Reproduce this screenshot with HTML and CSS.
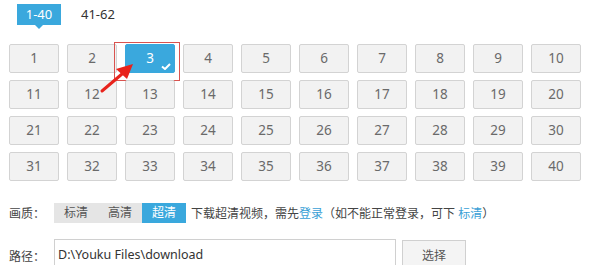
FILE: index.html
```html
<!DOCTYPE html>
<html lang="zh-CN">
<head>
    <meta charset="UTF-8">
    <title>选集下载</title>
    <link rel="stylesheet" href="styles.css">
</head>
<body>

<div class="tabs">
    <span class="tab active">1-40</span>
    <span class="tab">41-62</span>
</div>

<div class="episodes" id="episodes"></div>

<div class="row quality">
    <span class="label">画质：</span>
    <div class="seg">
        <span>标清</span>
        <span>高清</span>
        <span class="on">超清</span>
    </div>
    <span class="tip">下载超清视频，需先<a href="#">登录</a>（如不能正常登录，可下 <a href="#">标清</a>）</span>
</div>

<div class="row path">
    <span class="label">路径：</span>
    <input type="text" value="D:\Youku Files\download">
    <button>选择</button>
</div>

<svg class="arrow" width="599" height="265" viewBox="0 0 599 265">
    <line x1="102" y1="91" x2="122" y2="74" stroke="#e8231c" stroke-width="3" stroke-linecap="round"/>
    <polygon points="133,64 116,69 127,79" fill="#e8231c"/>
</svg>

<script>
    const list = document.getElementById('episodes');
    for (let i = 1; i <= 40; i++) {
        const b = document.createElement('span');
        b.className = 'ep';
        b.textContent = i;
        if (i === 3) {
            b.classList.add('picked');
            b.innerHTML = '3<svg class="check" width="10" height="7" viewBox="0 0 10 7"><path d="M1 3.5 L4 6 L9 1" stroke="#fff" stroke-width="2" fill="none"/></svg>';
        }
        list.appendChild(b);
    }
</script>

</body>
</html>
```

FILE: styles.css
```css
body {
    margin: 0;
    font-family: "Noto Sans", "Noto Sans CJK SC", sans-serif;
    font-size: 13px;
    color: #555;
    background: #fff;
    position: relative;
    width: 599px;
    height: 265px;
    overflow: hidden;
}
.tabs {
    display: flex;
    align-items: center;
    padding: 4px 0 0 17px;
    height: 21px;
}
.tab {
    line-height: 21px;
    color: #333;
    white-space: nowrap;
    position: relative;
}
.tab.active {
    background: #3aa8dd;
    color: #fff;
    width: 44px;
    text-align: center;
    margin-right: 20px;
}
.tab.active::after {
    content: "";
    position: absolute;
    left: 18px;
    bottom: -4px;
    border-left: 4px solid transparent;
    border-right: 4px solid transparent;
    border-top: 4px solid #3aa8dd;
}
.episodes {
    display: grid;
    grid-template-columns: repeat(10, 50px);
    column-gap: 8px;
    row-gap: 7px;
    padding: 19px 0 0 9px;
}
.ep {
    height: 27px;
    line-height: 27px;
    border: 1px solid #d3d3d3;
    border-radius: 2px;
    background: #f2f2f2;
    text-align: center;
    color: #6a6a6a;
    font-size: 13.5px;
    box-sizing: content-box;
    width: 48px;
    position: relative;
}
.ep.picked {
    background: #3aa8dd;
    border-color: #3aa8dd;
    color: #fff;
}
.ep.picked::after {
    content: "";
    position: absolute;
    left: -12px;
    right: -6px;
    top: -3px;
    bottom: -9px;
    border: 1px solid #d9534f;
}
.check {
    position: absolute;
    right: 3px;
    bottom: 2px;
}
.row {
    display: flex;
    align-items: center;
    padding-left: 9px;
    font-size: 12px;
}
.label {
    width: 45px;
    color: #444;
}
.quality {
    margin-top: 22px;
    height: 20px;
}
.seg {
    display: flex;
    background: #e5e5e5;
    height: 20px;
}
.seg span {
    width: 44px;
    text-align: center;
    line-height: 20px;
    color: #555;
}
.seg span.on {
    background: #3aa8dd;
    color: #fff;
}
.tip {
    margin-left: 5px;
    color: #444;
}
.tip a {
    color: #3a9fd6;
    text-decoration: none;
}
.path {
    margin-top: 16px;
    align-items: flex-start;
}
.path .label {
    padding-top: 8px;
}
.path input {
    width: 334px;
    height: 28px;
    border: 1px solid #d0d0d0;
    padding: 0 3px;
    font-family: "Noto Sans", "Noto Sans CJK SC", sans-serif;
    font-size: 12.5px;
    color: #333;
    outline: none;
}
.path button {
    margin-left: 6px;
    margin-top: 1px;
    width: 64px;
    height: 30px;
    border: 1px solid #d0d0d0;
    background: #f4f4f4;
    font-family: "Noto Sans", "Noto Sans CJK SC", sans-serif;
    font-size: 12px;
    color: #555;
}
.arrow {
    position: absolute;
    left: 0;
    top: 0;
    pointer-events: none;
}
```
